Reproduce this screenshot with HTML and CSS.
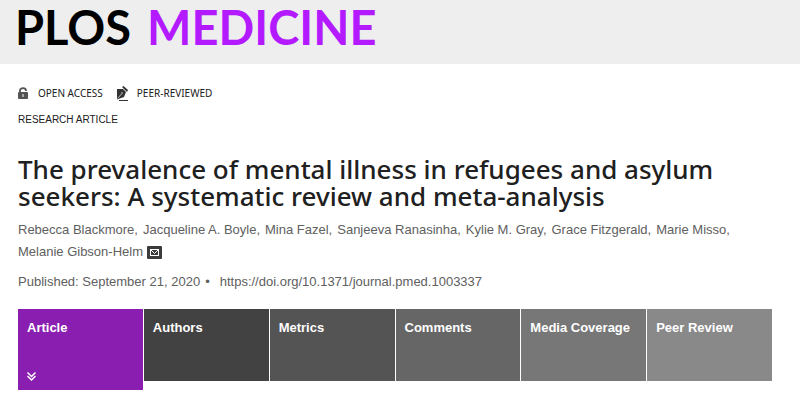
FILE: index.html
```html
<!doctype html>
<html lang="en">
<head>
<meta charset="utf-8">
<meta name="viewport" content="width=device-width, initial-scale=1.0">
<title>The prevalence of mental illness in refugees and asylum seekers: A systematic review and meta-analysis</title>
<link rel="stylesheet" href="styles.css">
</head>
<body>
<header class="site-header">
	<a class="logo" href="#"><span>PLOS</span> <span class="logo-journal">MEDICINE</span></a>
</header>

<main class="article">
	<ul class="badges">
		<li>
			<svg class="icon-lock" viewBox="0 0 10 12" width="10" height="12" aria-hidden="true">
				<path d="M2 6V3.500C2 .2 8 .2 8 3.500V4" fill="none" stroke="#555" stroke-width="1.800"/>
				<rect x="0" y="5" width="10" height="7" rx="1" fill="#555"/>
				<rect x="4" y="7" width="2" height="3" fill="#aaa"/>
			</svg>
			<span>Open Access</span>
		</li>
		<li>
			<svg class="icon-pen" viewBox="0 0 13 15" width="13" height="15" aria-hidden="true">
				<path d="M1 3L7 3L10 6L8 11L1 13.500Z" fill="#333"/>
				<path d="M6 1L7.500 0L12 4L11 6Z" fill="#333"/>
				<path d="M1.500 12.500L5.500 8" stroke="#bbb" stroke-width="1"/>
				<circle cx="6" cy="7" r="1" fill="#999"/>
				<path d="M3 14.500H12" stroke="#333" stroke-width="1"/>
			</svg>
			<span>Peer-reviewed</span>
		</li>
	</ul>
	<p class="article-type">Research Article</p>

	<h1 class="article-title">The prevalence of mental illness in refugees and asylum seekers: A systematic review and meta-analysis</h1>

	<ul class="authors">
		<li><a href="#">Rebecca Blackmore,</a></li>
		<li><a href="#">Jacqueline A. Boyle,</a></li>
		<li><a href="#">Mina Fazel,</a></li>
		<li><a href="#">Sanjeeva Ranasinha,</a></li>
		<li><a href="#">Kylie M. Gray,</a></li>
		<li><a href="#">Grace Fitzgerald,</a></li>
		<li><a href="#">Marie Misso,</a></li>
		<li>
			<a href="#">Melanie Gibson-Helm</a>
			<svg class="icon-mail" viewBox="0 0 15 13" width="15" height="13" role="img" aria-label="Email">
				<rect width="15" height="13" rx="1" fill="#3c3c3c"/>
				<rect x="3.500" y="3.500" width="8" height="6" fill="none" stroke="#fff"/>
				<path d="M4 4L7.500 7.500L11 4" fill="none" stroke="#fff"/>
			</svg>
		</li>
	</ul>

	<ul class="published">
		<li>Published: September 21, 2020</li>
		<li><a href="#">https://doi.org/10.1371/journal.pmed.1003337</a></li>
	</ul>

	<nav class="tabs">
		<a class="tab tab-article" href="#">
			Article
			<svg class="icon-down" viewBox="0 0 9 9" width="9" height="9" aria-hidden="true">
				<path d="M.5 .5L4.500 4.500L8.500 .5M.5 4L4.500 8L8.500 4" fill="none" stroke="#fff" stroke-width="1.500"/>
			</svg>
		</a>
		<a class="tab tab-authors" href="#">Authors</a>
		<a class="tab tab-metrics" href="#">Metrics</a>
		<a class="tab tab-comments" href="#">Comments</a>
		<a class="tab tab-media" href="#">Media Coverage</a>
		<a class="tab tab-review" href="#">Peer Review</a>
	</nav>
</main>
</body>
</html>
```
FILE: styles.css
```css
* {
	box-sizing: border-box;
	margin: 0;
	padding: 0;
}
body {
	font: 13px/22px "Liberation Sans", Arial, sans-serif;
	color: #606060;
	background: #fff;
}
ul {
	list-style: none;
}
a {
	color: inherit;
	text-decoration: none;
}

/* header */
.site-header {
	padding: 0 15px 10px;
	background: #eee;
}
.logo {
	display: flex;
	gap: 16px;
	font: 700 47px/54px Lato, sans-serif;
	color: #000;
	white-space: nowrap;
}
.logo-journal {
	color: #b31aff;
}

/* article heading */
.article {
	padding: 20px 28px 12px 18px;
}
.badges {
	display: flex;
	gap: 13px;
	font: 10px/18px "Noto Sans", sans-serif;
	color: #202020;
	text-transform: uppercase;
}
.badges li {
	display: flex;
	align-items: center;
	gap: 8px;
}
.icon-lock {
	margin-right: 2px;
}
.article-type {
	margin-top: 9px;
	font-size: 10px;
	line-height: 18px;
	color: #202020;
	text-transform: uppercase;
}
.article-title {
	margin-top: 27px;
	font: 500 26px/27px "Noto Sans", sans-serif;
	color: #202020;
}
.authors {
	display: flex;
	flex-wrap: wrap;
	column-gap: 5px;
	margin-top: 9px;
}
.icon-mail {
	vertical-align: -3px;
}
.published {
	display: flex;
	margin-top: 8px;
}
.published li + li::before {
	content: "•";
	margin: 0 10px 0 5px;
}

/* section tabs */
.tabs {
	display: grid;
	grid-template-columns: repeat(6, 1fr);
	align-items: start;
	gap: 1px;
	margin-top: 16px;
}
.tab {
	min-height: 72px;
	padding: 8px 9px;
	font-weight: bold;
	color: #fff;
}
.tab-article {
	display: flex;
	flex-direction: column;
	justify-content: space-between;
	min-height: 81px;
	padding-bottom: 9px;
	background: #8a1eb0;
}
.tab-authors { background: #424242; }
.tab-metrics { background: #545454; }
.tab-comments { background: #666; }
.tab-media { background: #777; }
.tab-review { background: #898989; }
```
